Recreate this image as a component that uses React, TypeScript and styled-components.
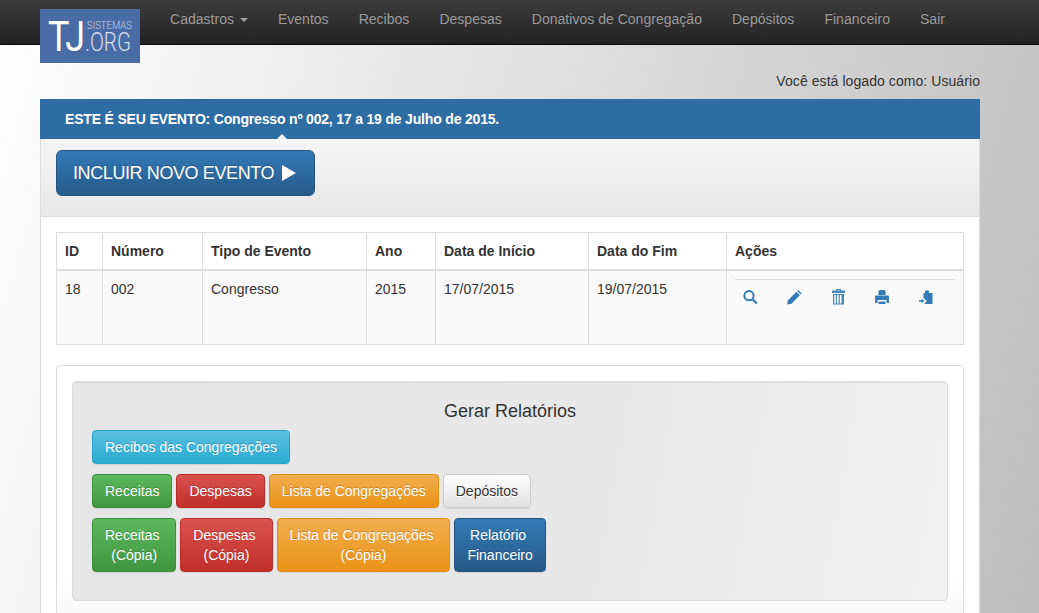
import { createGlobalStyle, styled } from "styled-components";

const GlobalStyle = createGlobalStyle`
  html, body {
    margin: 0;
    height: 100%;
    overflow: hidden;
  }
  body {
    font-family: "Liberation Sans", Arial, sans-serif;
    font-size: 14px;
    line-height: 20px;
    color: #333;
    background: linear-gradient(105deg, #ffffff 0%, #bdbdbd 100%) no-repeat;
    min-height: 613px;
  }
`;

const Navbar = styled.nav`
  height: 45px;
  box-sizing: border-box;
  padding-left: 40px;
  display: flex;
  align-items: flex-start;
  background: linear-gradient(to bottom, #3c3c3c, #222);
  border-bottom: 1px solid #080808;
`;

const Logo = styled.svg`
  flex: none;
  display: block;
  width: 100px;
  height: 54px;
  margin: 9px 15px 0 0;
  font-family: "Roboto", "Liberation Sans", sans-serif;
  font-weight: 300;
`;

const NavLink = styled.a`
  padding: 9px 15px;
  color: #9d9d9d;
  letter-spacing: 0.02px;
  white-space: nowrap;
  text-shadow: 0 -1px 0 rgba(0, 0, 0, 0.25);
`;

const Caret = styled.span`
  display: inline-block;
  margin-left: 2px;
  vertical-align: middle;
  border-top: 4px solid #9d9d9d;
  border-left: 4px solid transparent;
  border-right: 4px solid transparent;
`;

const Page = styled.main`
  width: 940px;
  margin-left: 40px;
`;

const LoggedAs = styled.div`
  height: 54px;
  padding-top: 26px;
  box-sizing: border-box;
  text-align: right;
  letter-spacing: 0.07px;
`;

const Panel = styled.section`
  box-sizing: border-box;
  border: 1px solid #ddd;
  border-top: 0;
  background: #fff;
`;

const PanelTitle = styled.h3`
  margin: 0 -1px;
  height: 40px;
  padding: 10px 25px;
  box-sizing: border-box;
  position: relative;
  background: #2e6da4;
  color: #fff;
  font-size: 14px;
  font-weight: bold;
  letter-spacing: -0.18px;

  &::after {
    content: "";
    position: absolute;
    left: 237px;
    bottom: 0;
    border-bottom: 5px solid #f2f2f2;
    border-left: 5px solid transparent;
    border-right: 5px solid transparent;
  }
`;

const Toolbar = styled.div`
  height: 78px;
  padding: 11px 15px 0;
  box-sizing: border-box;
  background: linear-gradient(to bottom, #f5f5f5, #e8e8e8);
  border-bottom: 1px solid #ddd;
`;

const PrimaryButton = styled.button`
  height: 46px;
  width: 259px;
  padding: 0 0 0 16px;
  display: flex;
  align-items: center;
  gap: 8px;
  box-sizing: border-box;
  font-family: inherit;
  font-size: 18px;
  letter-spacing: -0.4px;
  color: #fff;
  text-shadow: 0 -1px 0 rgba(0, 0, 0, 0.2);
  background: linear-gradient(to bottom, #337ab7, #265a88);
  border: 1px solid #245580;
  border-radius: 6px;
`;

const PanelBody = styled.div`
  padding: 15px;
`;

const Table = styled.table`
  width: 907px;
  table-layout: fixed;
  border-collapse: collapse;
  background: #fff;
`;

const HeadCell = styled.th`
  height: 37px;
  padding: 8px;
  box-sizing: border-box;
  border: 1px solid #ddd;
  border-bottom: 2px solid #ddd;
  text-align: left;
  font-weight: bold;
`;

const Cell = styled.td`
  height: 74px;
  padding: 8px;
  box-sizing: border-box;
  vertical-align: top;
  border: 1px solid #ddd;
  background: #f9f9f9;
`;

const ActionsBar = styled.div`
  display: flex;
  gap: 29px;
  padding: 10px 0 0 8px;
  border-top: 1px solid #ddd;
  color: #337ab7;
`;

const ActionIcon = styled.svg`
  display: block;
  flex: none;
  width: 15px;
  height: 15px;
  overflow: visible;
  fill: currentColor;
`;

const ReportsCard = styled.div`
  margin-top: 20px;
  padding: 15px;
  border: 1px solid #ddd;
  border-radius: 4px;
  background: linear-gradient(to bottom, #fff 85%, #f8f8f8 100%);
`;

const ReportsBox = styled.div`
  height: 220px;
  box-sizing: border-box;
  padding: 19px 19px;
  border: 1px solid #ddd;
  border-radius: 4px;
  background: linear-gradient(100deg, #e6e6e6 0%, #e8e8e8 60%, #f0f0f0 100%);
  box-shadow: inset 0 1px 1px rgba(0, 0, 0, 0.05);
`;

const ReportsTitle = styled.h4`
  margin: 0 0 9px;
  font-size: 18px;
  line-height: 20px;
  font-weight: normal;
  text-align: center;
`;

const ButtonRow = styled.div`
  display: flex;
  align-items: flex-start;
  gap: 4px;
  margin-bottom: 10px;
`;

const palette = {
  info: { from: "#5bc0de", to: "#2aabd2", border: "#28a4c9", text: "#fff" },
  success: { from: "#5cb85c", to: "#419641", border: "#3e8f3e", text: "#fff" },
  danger: { from: "#d9534f", to: "#c12e2a", border: "#b92c28", text: "#fff" },
  warning: { from: "#f0ad4e", to: "#eb9316", border: "#e38d13", text: "#fff" },
  neutral: { from: "#fff", to: "#e0e0e0", border: "#ccc", text: "#333" },
  primary: { from: "#337ab7", to: "#265a88", border: "#245580", text: "#fff" },
};

type Tone = keyof typeof palette;

const ReportButton = styled.button<{ $tone: Tone }>`
  padding: 6px 12px;
  font-family: inherit;
  font-size: 14px;
  line-height: 20px;
  text-align: center;
  white-space: nowrap;
  color: ${(p) => palette[p.$tone].text};
  text-shadow: ${(p) => (p.$tone === "neutral" ? "0 1px 0 #fff" : "0 -1px 0 rgba(0, 0, 0, 0.2)")};
  background: linear-gradient(
    to bottom,
    ${(p) => palette[p.$tone].from},
    ${(p) => palette[p.$tone].to}
  );
  border: 1px solid ${(p) => palette[p.$tone].border};
  border-radius: 4px;
  box-shadow: 0 1px 1px rgba(0, 0, 0, 0.08);
`;

const columns = [46, 100, 164, 69, 153, 138, 237];
const headers = ["ID", "Número", "Tipo de Evento", "Ano", "Data de Início", "Data do Fim", "Ações"];
const values = ["18", "002", "Congresso", "2015", "17/07/2015", "19/07/2015"];
const links = ["Eventos", "Recibos", "Despesas", "Donativos de Congregação", "Depósitos", "Financeiro", "Sair"];

function SearchIcon() {
  return (
    <ActionIcon viewBox="0 0 15 15">
      <circle cx="6" cy="5.700" r="4.600" fill="none" stroke="currentColor" strokeWidth="2" />
      <path d="M9.800 9.500l4 4" fill="none" stroke="currentColor" strokeWidth="2.400" />
    </ActionIcon>
  );
}

function PencilIcon() {
  return (
    <ActionIcon viewBox="0 0 15 15">
      <path d="M0 14.500l1-4.200 8.500-8.500 3.400 3.400-8.500 8.500z" />
      <path d="M10.300 1l1-.9 3.300 3.300-.9 1z" />
    </ActionIcon>
  );
}

function TrashIcon() {
  return (
    <ActionIcon viewBox="0 0 15 15">
      <path
        fillRule="evenodd"
        opacity="0.9"
        d="M5 -1h5v1.500h4V3H1V.5h4zM6 0v.5h3V0zM2 4h11v10.500H2zM3.200 5v8.500h1.700V5zM6 5v8.500h1.700V5zM8.800 5v8.500h1.700V5z"
      />
    </ActionIcon>
  );
}

function PrintIcon() {
  return (
    <ActionIcon viewBox="0 0 15 15">
      <path d="M3.500 1.500q0-1.500 1.500-1.500h4q1.500 0 1.500 1.500V5h-7z" />
      <path
        fillRule="evenodd"
        d="M1 5.500h12q1 0 1 1V13h-2.500v-3h-9v3H0V6.500q0-1 1-1z"
      />
      <path d="M3.500 11.500h7V14h-7z" />
    </ActionIcon>
  );
}

function ClipboardIcon() {
  return (
    <ActionIcon viewBox="0 0 15 15">
      <path d="M6 1q2-1.500 4 0v2h3.500V14H5.500v-.8L7.800 11 5 8.500h-.5V3H6z" />
      <path d="M0 10.300h2.600V8.700L5.500 11l-2.900 2.300v-1.600H0z" />
    </ActionIcon>
  );
}

export default function App() {
  return (
    <>
      <GlobalStyle />
      <Navbar>
        <Logo viewBox="0 0 100 54">
          <rect width="100" height="54" fill="#4a6ca6" />
          <text x="8" y="42" fontSize="43" fontWeight="400" fill="#fff" textLength="37" lengthAdjust="spacingAndGlyphs">
            TJ
          </text>
          <text x="47" y="20" fontSize="11" fill="#c5d0e4" textLength="45" lengthAdjust="spacingAndGlyphs">
            SISTEMAS
          </text>
          <text x="45" y="42" fontSize="26" fill="#d5deec" textLength="46" lengthAdjust="spacingAndGlyphs">
            .ORG
          </text>
        </Logo>
        <NavLink>
          Cadastros <Caret />
        </NavLink>
        {links.map((label) => (
          <NavLink key={label}>{label}</NavLink>
        ))}
      </Navbar>
      <Page>
        <LoggedAs>Você está logado como: Usuário</LoggedAs>
        <Panel>
          <PanelTitle>ESTE É SEU EVENTO: Congresso nº 002, 17 a 19 de Julho de 2015.</PanelTitle>
          <Toolbar>
            <PrimaryButton>
              INCLUIR NOVO EVENTO
              <svg width="14" height="16" viewBox="0 0 14 16" fill="#fff">
                <path d="M0 0l14 8-14 8z" />
              </svg>
            </PrimaryButton>
          </Toolbar>
          <PanelBody>
            <Table>
              <colgroup>
                {columns.map((width, index) => (
                  <col key={index} width={width} />
                ))}
              </colgroup>
              <thead>
                <tr>
                  {headers.map((label) => (
                    <HeadCell key={label}>{label}</HeadCell>
                  ))}
                </tr>
              </thead>
              <tbody>
                <tr>
                  {values.map((value) => (
                    <Cell key={value}>{value}</Cell>
                  ))}
                  <Cell>
                    <ActionsBar>
                      <SearchIcon />
                      <PencilIcon />
                      <TrashIcon />
                      <PrintIcon />
                      <ClipboardIcon />
                    </ActionsBar>
                  </Cell>
                </tr>
              </tbody>
            </Table>
            <ReportsCard>
              <ReportsBox>
                <ReportsTitle>Gerar Relatórios</ReportsTitle>
                <ButtonRow>
                  <ReportButton $tone="info">Recibos das Congregações</ReportButton>
                </ButtonRow>
                <ButtonRow>
                  <ReportButton $tone="success">Receitas</ReportButton>
                  <ReportButton $tone="danger">Despesas</ReportButton>
                  <ReportButton $tone="warning">Lista de Congregações</ReportButton>
                  <ReportButton $tone="neutral">Depósitos</ReportButton>
                </ButtonRow>
                <ButtonRow>
                  <ReportButton $tone="success">
                    Receitas&nbsp;
                    <br />
                    (Cópia)
                  </ReportButton>
                  <ReportButton $tone="danger">
                    Despesas&nbsp;
                    <br />
                    (Cópia)
                  </ReportButton>
                  <ReportButton $tone="warning">
                    Lista de Congregações&nbsp;
                    <br />
                    (Cópia)
                  </ReportButton>
                  <ReportButton $tone="primary">
                    Relatório&nbsp;
                    <br />
                    Financeiro
                  </ReportButton>
                </ButtonRow>
              </ReportsBox>
            </ReportsCard>
          </PanelBody>
        </Panel>
      </Page>
    </>
  );
}
